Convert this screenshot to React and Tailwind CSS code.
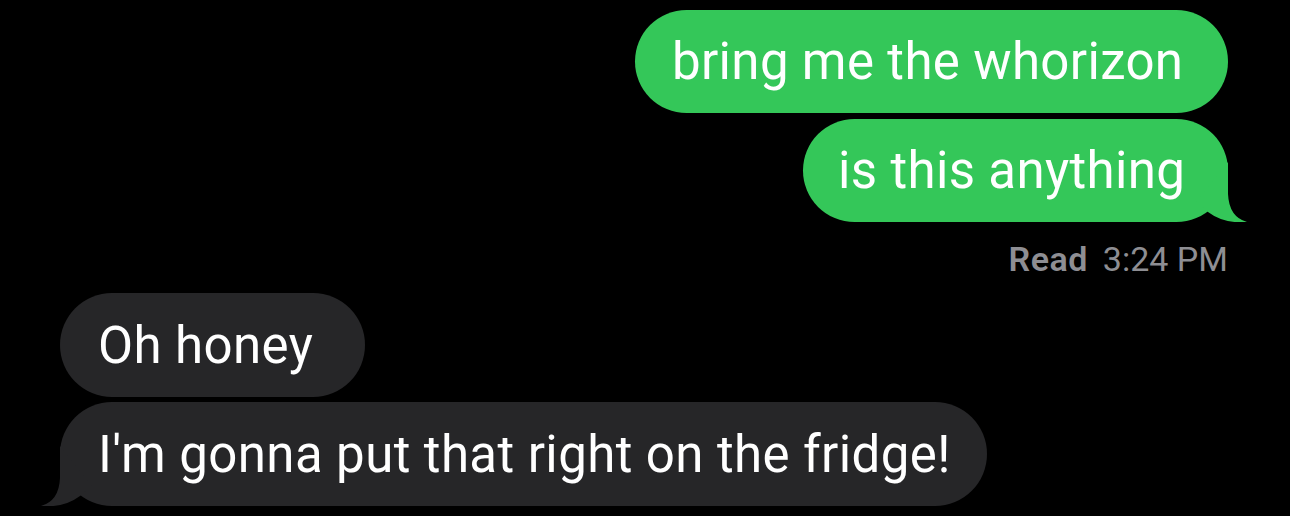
import React from "react";

const font = { fontFamily: "Roboto, 'Liberation Sans', sans-serif" };

function SentTail() {
  return (
    <svg className="absolute right-[-20px] bottom-0" width="80" height="60" viewBox="0 0 80 60">
      <path d="M60 0 L60 32 Q61 55 79 60 Q56 62 40 50 L28 40 Z" fill="#34c759" />
    </svg>
  );
}

function RecvTail() {
  return (
    <svg className="absolute left-[-20px] bottom-0" width="80" height="60" viewBox="0 0 80 60">
      <path d="M20 0 L20 32 Q19 55 1 60 Q24 62 40 50 L52 40 Z" fill="#262628" />
    </svg>
  );
}

export default function App() {
  return (
    <div className="w-[1290px] h-[516px] bg-black flex flex-col overflow-hidden" style={font}>
      <div className="flex flex-col items-end pr-[62px] pt-[10px] gap-[6px]">
        <div className="w-[593px] h-[103px] rounded-[52px] bg-[#34c759] text-white text-[51px] leading-none tracking-[0.35px] flex items-center pl-[37px]">
          <span>bring me the whorizon</span>
        </div>
        <div className="relative w-[425px] h-[103px] rounded-[52px] bg-[#34c759] text-white text-[51px] leading-none tracking-[0.35px] flex items-center pl-[35px]">
          <span className="relative">is this anything</span>
          <SentTail />
        </div>
      </div>
      <div className="h-[71px] flex justify-end items-start pr-[62px] pt-[20px] text-[34px] leading-none text-[#8e8e93]">
        <span className="font-semibold tracking-[0.5px]">Read</span>
        <span className="ml-[15px]">3:24 PM</span>
      </div>
      <div className="flex flex-col items-start pl-[60px] gap-[5px]">
        <div className="w-[305px] h-[104px] rounded-[52px] bg-[#262628] text-white text-[51px] leading-none tracking-[0.4px] flex items-center pl-[38px]">
          <span>Oh honey</span>
        </div>
        <div className="relative w-[927px] h-[104px] rounded-[52px] bg-[#262628] text-white text-[51px] leading-none tracking-[0.4px] flex items-center pl-[38px]">
          <RecvTail />
          <span className="relative">I'm gonna put that right on the fridge!</span>
        </div>
      </div>
    </div>
  );
}
